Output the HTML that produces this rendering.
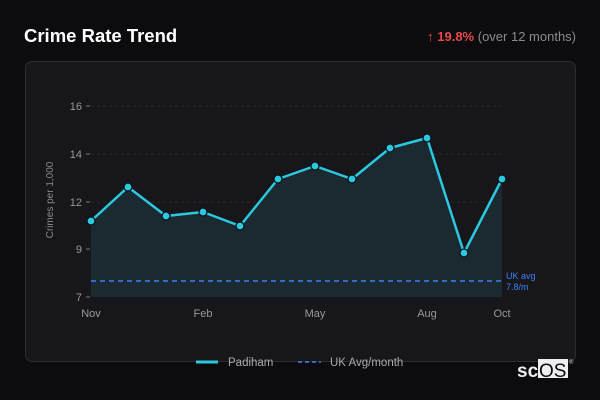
<!DOCTYPE html>
<html><head><style>
body{margin:0;width:600px;height:400px;background:#0c0c0f;font-family:"Liberation Sans","DejaVu Sans",sans-serif;overflow:hidden;position:relative}
.t{position:absolute;left:24px;top:25px;color:#fff;font-weight:bold;font-size:18.5px;font-family:"Liberation Sans",sans-serif}
.r{position:absolute;right:24px;top:29px;font-size:13px;color:#8a8a90;font-family:"Liberation Sans",sans-serif}
.r b{color:#e5484d}
.card{position:absolute;left:25px;top:61px;width:549px;height:299px;background:#17171b;border:1px solid #2c2c31;border-radius:7px}
svg{position:absolute;left:0;top:0}
</style></head><body>
<div class="t">Crime Rate Trend</div>
<div class="r"><b><span style="font-weight:normal">↑</span> 19.8%</b> (over 12 months)</div>
<div class="card"></div>
<svg width="600" height="400" font-family="Liberation Sans,sans-serif">
<g stroke="#29292e" stroke-dasharray="3,3" stroke-width="1">
<line x1="91" y1="106" x2="502" y2="106"/><line x1="91" y1="154" x2="502" y2="154"/><line x1="91" y1="202" x2="502" y2="202"/><line x1="91" y1="249" x2="502" y2="249"/>
</g>
<g stroke="#777" stroke-width="1"><line x1="86" y1="106" x2="90" y2="106"/><line x1="86" y1="154" x2="90" y2="154"/><line x1="86" y1="202" x2="90" y2="202"/><line x1="86" y1="249" x2="90" y2="249"/><line x1="86" y1="297" x2="90" y2="297"/></g>
<g fill="#999" font-size="11" text-anchor="end"><text x="82" y="110">16</text><text x="82" y="158">14</text><text x="82" y="206">12</text><text x="82" y="253">9</text><text x="82" y="301">7</text></g>
<text transform="translate(53,200) rotate(-90)" fill="#888" font-size="10" text-anchor="middle">Crimes per 1,000</text>
<path d="M91,221 L128,187 L166,216 L203,212 L240,226 L278,179 L315,166 L352,179 L390,148 L427,138 L464,253 L502,179 L502,297 L91,297Z" fill="#1a2a30"/>
<line x1="91" y1="281" x2="502" y2="281" stroke="#3b82f6" stroke-width="1.6" stroke-dasharray="5,4"/>
<polyline points="91,221 128,187 166,216 203,212 240,226 278,179 315,166 352,179 390,148 427,138 464,253 502,179" fill="none" stroke="#2bc8e0" stroke-width="2.5" stroke-linejoin="round"/>
<g fill="#2bc8e0" stroke="#0c1418" stroke-width="1.3">
<circle cx="91" cy="221" r="4"/><circle cx="128" cy="187" r="4"/><circle cx="166" cy="216" r="4"/><circle cx="203" cy="212" r="4"/><circle cx="240" cy="226" r="4"/><circle cx="278" cy="179" r="4"/><circle cx="315" cy="166" r="4"/><circle cx="352" cy="179" r="4"/><circle cx="390" cy="148" r="4"/><circle cx="427" cy="138" r="4"/><circle cx="464" cy="253" r="4"/><circle cx="502" cy="179" r="4"/>
</g>
<g fill="#3b82f6" font-size="9"><text x="506" y="279">UK avg</text><text x="506" y="290">7.8/m</text></g>
<g fill="#999" font-size="11" text-anchor="middle"><text x="91" y="317">Nov</text><text x="203" y="317">Feb</text><text x="315" y="317">May</text><text x="427" y="317">Aug</text><text x="502" y="317">Oct</text></g>
<line x1="196" y1="362" x2="218" y2="362" stroke="#2bc8e0" stroke-width="3"/>
<text x="228" y="366" fill="#aaa" font-size="11.5">Padiham</text>
<line x1="298" y1="362" x2="321" y2="362" stroke="#3b82f6" stroke-width="1.6" stroke-dasharray="4,3"/>
<text x="330" y="366" fill="#aaa" font-size="11.5">UK Avg/month</text>
<rect x="538" y="359" width="30" height="19" fill="#eee"/>
<text x="517" y="377" fill="#eee" font-size="19" font-weight="bold">sc</text>
<text x="539" y="377" fill="#0c0c0f" font-size="19">OS</text>
<text x="569" y="364" fill="#ccc" font-size="6">®</text>
</svg>
</body></html>
